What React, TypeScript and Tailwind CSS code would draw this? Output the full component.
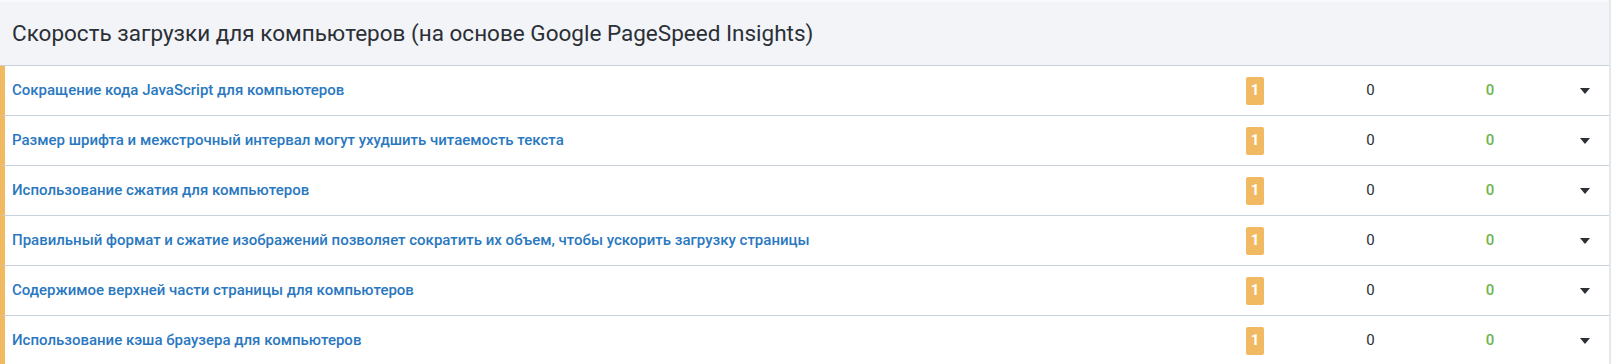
import React from "react";

const rows = [
  "Сокращение кода JavaScript для компьютеров",
  "Размер шрифта и межстрочный интервал могут ухудшить читаемость текста",
  "Использование сжатия для компьютеров",
  "Правильный формат и сжатие изображений позволяет сократить их объем, чтобы ускорить загрузку страницы",
  "Содержимое верхней части страницы для компьютеров",
  "Использование кэша браузера для компьютеров",
];

const Caret = () => (
  <svg width="10" height="6" viewBox="0 0 10 6" className="block">
    <path d="M0 0h10L5 6z" fill="#2b2f36" />
  </svg>
);

const App = () => {
  return (
    <div className="w-[1613px] h-[364px] overflow-hidden bg-white font-['Roboto',sans-serif]">
      <div className="w-[1611px] border-r-2 border-[#e4e7ec]">
        <div className="h-[66px] border-t-2 border-t-[#f8f9fb] border-b border-b-[#c9d1db] bg-[#f2f4f8] flex items-center pl-3">
          <h2 className="text-[22.5px] text-[#2b2f36] leading-none">
            Скорость загрузки для компьютеров (на основе Google PageSpeed Insights)
          </h2>
        </div>
        {rows.map((title) => (
          <div
            key={title}
            className="h-[50px] border-b border-[#c9d1db] border-l-[5px] border-l-[#f2b963] flex items-center"
          >
            <div className="flex-1 pl-[7px] text-[15px] font-medium text-[#2a78c0] truncate">{title}</div>
            <div className="w-[134px] flex justify-center">
              <span className="w-[18px] h-[28px] rounded-[2px] bg-[#f2b963] text-white text-[15px] font-bold flex items-center justify-center">
                1
              </span>
            </div>
            <div className="w-[97px] text-center text-[15px] text-[#2b2f36]">0</div>
            <div className="w-[142px] text-center text-[15px] font-medium text-[#6db54c]">0</div>
            <div className="w-[48px] flex justify-center">
              <Caret />
            </div>
          </div>
        ))}
      </div>
    </div>
  );
};

export default App;
